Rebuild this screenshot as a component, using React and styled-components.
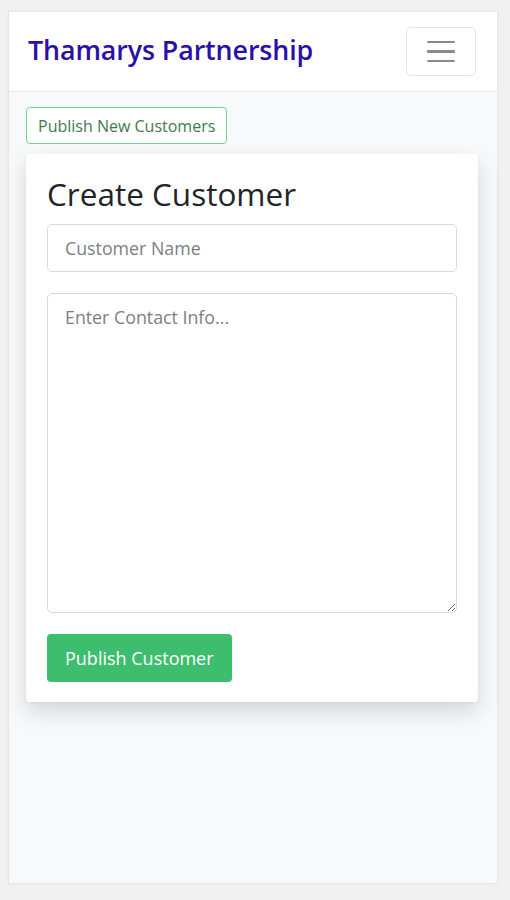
import React from "react";
import styled, { createGlobalStyle } from "styled-components";

const Global = createGlobalStyle`
  html, body { margin: 0; padding: 0; background: #f1f1f1; }
  body { font-family: "Open Sans", "Liberation Sans", sans-serif; }
  * { box-sizing: border-box; }
`;

const Page = styled.div`
  padding: 11px 12px 16px 8px;
  height: 900px;
`;

const Frame = styled.div`
  width: 490px;
  height: 873px;
  background: #f8f9fa;
  border: 1px solid #e6e6e6;
  box-shadow: 0 0 4px rgba(0,0,0,0.04);
  display: flex;
  flex-direction: column;
`;

const Navbar = styled.nav`
  height: 80px;
  background: #fff;
  border-bottom: 1px solid #ececec;
  display: flex;
  align-items: center;
  justify-content: space-between;
  padding: 0 21px 0 19px;
`;

const Brand = styled.div`
  font-family: "Open Sans", sans-serif;
  font-size: 26.8px;
  line-height: 32px;
  font-weight: 600;
  color: #2a10a8;
  letter-spacing: -0.1px;
  margin-top: -3px;
`;

const Toggler = styled.button`
  width: 70px;
  height: 49px;
  background: #fff;
  border: 1px solid #e4e4e4;
  border-radius: 5px;
  display: flex;
  flex-direction: column;
  align-items: center;
  justify-content: center;
  gap: 7px;
  padding: 0;
`;

const Bar = styled.span`
  display: block;
  width: 28px;
  height: 2.5px;
  background: #8a8a8a;
  border-radius: 1px;
`;

const Content = styled.main`
  padding: 15px 19px 0 17px;
  display: flex;
  flex-direction: column;
  align-items: flex-start;
  gap: 10px;
`;

const OutlineButton = styled.button`
  height: 37px;
  padding: 0 11px;
  background: #fff;
  border: 1.5px solid #72d197;
  border-radius: 4px;
  font-family: "Open Sans", sans-serif;
  font-size: 16px;
  color: #3f7a4e;
`;

const Card = styled.section`
  width: 452px;
  background: #fff;
  border-radius: 3px;
  box-shadow: 0 10px 22px rgba(0,0,0,0.14), 0 1px 3px rgba(0,0,0,0.05);
  padding: 21px 21px 20px 21px;
  display: flex;
  flex-direction: column;
  align-items: flex-start;
`;

const Heading = styled.h2`
  margin: 0 0 11px 0;
  font-family: "Open Sans", sans-serif;
  font-weight: 400;
  font-size: 31.5px;
  line-height: 38px;
  color: #212529;
`;

const Field = styled.input`
  width: 410px;
  height: 48px;
  border: 1px solid #dadada;
  border-radius: 5px;
  padding: 0 17px;
  font-family: "Open Sans", sans-serif;
  font-size: 17.8px;
  color: #333;
  margin-bottom: 21px;
  &::placeholder { color: #7b7f85; }
`;

const Area = styled.textarea`
  width: 410px;
  height: 320px;
  border: 1px solid #dadada;
  border-radius: 5px;
  padding: 10px 17px;
  font-family: "Open Sans", sans-serif;
  font-size: 17.8px;
  line-height: 26px;
  color: #333;
  margin-bottom: 21px;
  resize: vertical;
  &::placeholder { color: #7b7f85; }
`;

const PrimaryButton = styled.button`
  height: 48px;
  padding: 0 18px;
  background: #3dbd6e;
  border: none;
  border-radius: 4px;
  font-family: "Open Sans", sans-serif;
  font-size: 18px;
  color: #fff;
`;

export default function App() {
  return (
    <>
      <Global />
      <Page>
        <Frame>
          <Navbar>
            <Brand>Thamarys Partnership</Brand>
            <Toggler aria-label="menu">
              <Bar />
              <Bar />
              <Bar />
            </Toggler>
          </Navbar>
          <Content>
            <OutlineButton>Publish New Customers</OutlineButton>
            <Card>
              <Heading>Create Customer</Heading>
              <Field placeholder="Customer Name" />
              <Area placeholder="Enter Contact Info..." />
              <PrimaryButton>Publish Customer</PrimaryButton>
            </Card>
          </Content>
        </Frame>
      </Page>
    </>
  );
}
